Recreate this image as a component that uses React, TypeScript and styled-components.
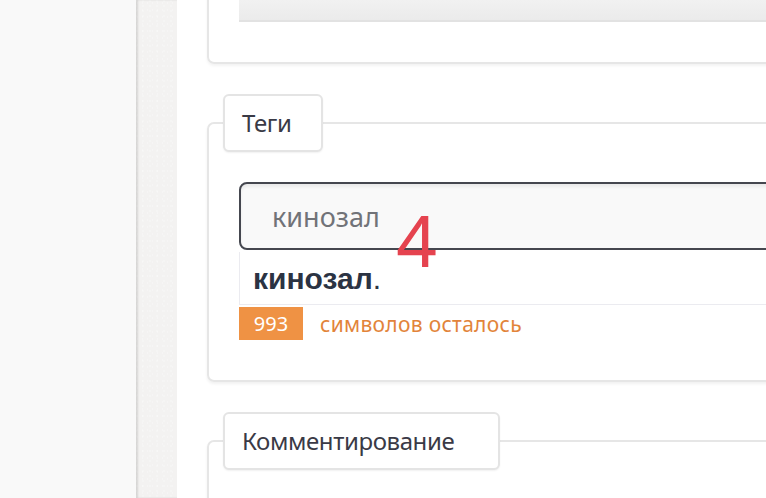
import styled, { createGlobalStyle } from 'styled-components';

const GlobalStyle = createGlobalStyle`
  html, body {
    margin: 0;
    padding: 0;
    overflow: hidden;
    background: #f9f9f9;
  }
  body {
    font-family: "Noto Sans", "Open Sans", sans-serif;
  }
`;

const Page = styled.div`
  display: flex;
  height: 498px;
  width: 766px;
  overflow: hidden;
`;

const SidePane = styled.div`
  flex: 0 0 136px;
  background: #f9f9f9;
`;

const Strip = styled.div`
  flex: 0 0 41px;
  background:
    radial-gradient(circle at 30% 40%, rgba(255, 255, 255, 0.25) 0 1px, transparent 1px) 0 0 / 5px 7px,
    radial-gradient(circle at 70% 60%, rgba(255, 255, 255, 0.2) 0 1px, transparent 1px) 2px 3px / 7px 5px,
    #f3f2f1;
  box-shadow: inset 2px 0 2px rgba(0, 0, 0, 0.12);
`;

const Content = styled.main`
  flex: 0 0 auto;
  width: 700px;
  background: #fff;
  display: flex;
  flex-direction: column;
  gap: 30px;
  padding-left: 30px;
`;

const TopCard = styled.div`
  margin-top: -62px;
  border: 2px solid #e6e6e6;
  border-radius: 7px;
  padding: 30px 0 40px 30px;
  box-shadow: 0 2px 3px rgba(0, 0, 0, 0.05);
`;

const GrayBox = styled.div`
  height: 50px;
  background: linear-gradient(#fafafa, #ebebeb);
  border-bottom: 2px solid #e2e2e2;
`;

const Group = styled.fieldset`
  margin: 0;
  padding: 0;
  border: 2px solid #e6e6e6;
  border-radius: 7px;
  box-shadow: 0 2px 3px rgba(0, 0, 0, 0.06);
  min-width: 0;
`;

const Legend = styled.legend<{ $tail: number }>`
  margin-left: 14px;
  padding: 0 ${(p) => p.$tail}px 0 17px;
  height: 54px;
  border: 2px solid #e4e4e4;
  border-radius: 6px;
  background: #fff;
  box-shadow: 0 1px 2px rgba(0, 0, 0, 0.06);
  font-size: 24px;
  letter-spacing: -0.4px;
  line-height: 54px;
  color: #3a3a46;
`;

const GroupBody = styled.div`
  position: relative;
  padding: 30px 0 40px 30px;
  display: flex;
  flex-direction: column;
`;

const TagInput = styled.div`
  height: 68px;
  box-sizing: border-box;
  border: 2px solid #45474f;
  border-radius: 8px;
  background: #f9f9f9;
  box-shadow: inset 0 3px 3px rgba(0, 0, 0, 0.06);
  display: flex;
  align-items: center;
  padding-left: 31px;
  font-size: 27px;
  color: #717378;
`;

const Suggestion = styled.div`
  margin-top: 2px;
  height: 50px;
  border: 1px solid #ebebf0;
  border-top: none;
  background: #fff;
  display: flex;
  align-items: center;
  padding-left: 13px;
  padding-top: 2px;
  font-family: "Liberation Sans", Arial, sans-serif;
  font-size: 30px;
  color: #2b3343;
`;

const Counter = styled.div`
  margin-top: 2px;
  display: flex;
  align-items: center;
  gap: 17px;
`;

const CountBadge = styled.span`
  width: 64px;
  height: 33px;
  background: #ef9244;
  color: #fff;
  font-size: 20px;
  line-height: 33px;
  text-align: center;
`;

const CountText = styled.span`
  font-size: 21px;
  letter-spacing: 0.3px;
  color: #e2843a;
`;

const Marker = styled.span`
  position: absolute;
  left: 187px;
  top: 52px;
  font-family: "Liberation Sans", Arial, sans-serif;
  font-size: 75px;
  line-height: 1;
  color: #e5434f;
  pointer-events: none;
`;

export default function App() {
  return (
    <>
      <GlobalStyle />
      <Page>
        <SidePane />
        <Strip />
        <Content>
          <TopCard>
            <GrayBox />
          </TopCard>
          <Group>
            <Legend $tail={30}>Теги</Legend>
            <GroupBody>
              <TagInput>кинозал</TagInput>
              <Suggestion>
                <strong>кинозал</strong>.
              </Suggestion>
              <Counter>
                <CountBadge>993</CountBadge>
                <CountText>символов осталось</CountText>
              </Counter>
              <Marker>4</Marker>
            </GroupBody>
          </Group>
          <Group>
            <Legend $tail={44}>Комментирование</Legend>
            <GroupBody />
          </Group>
        </Content>
      </Page>
    </>
  );
}
